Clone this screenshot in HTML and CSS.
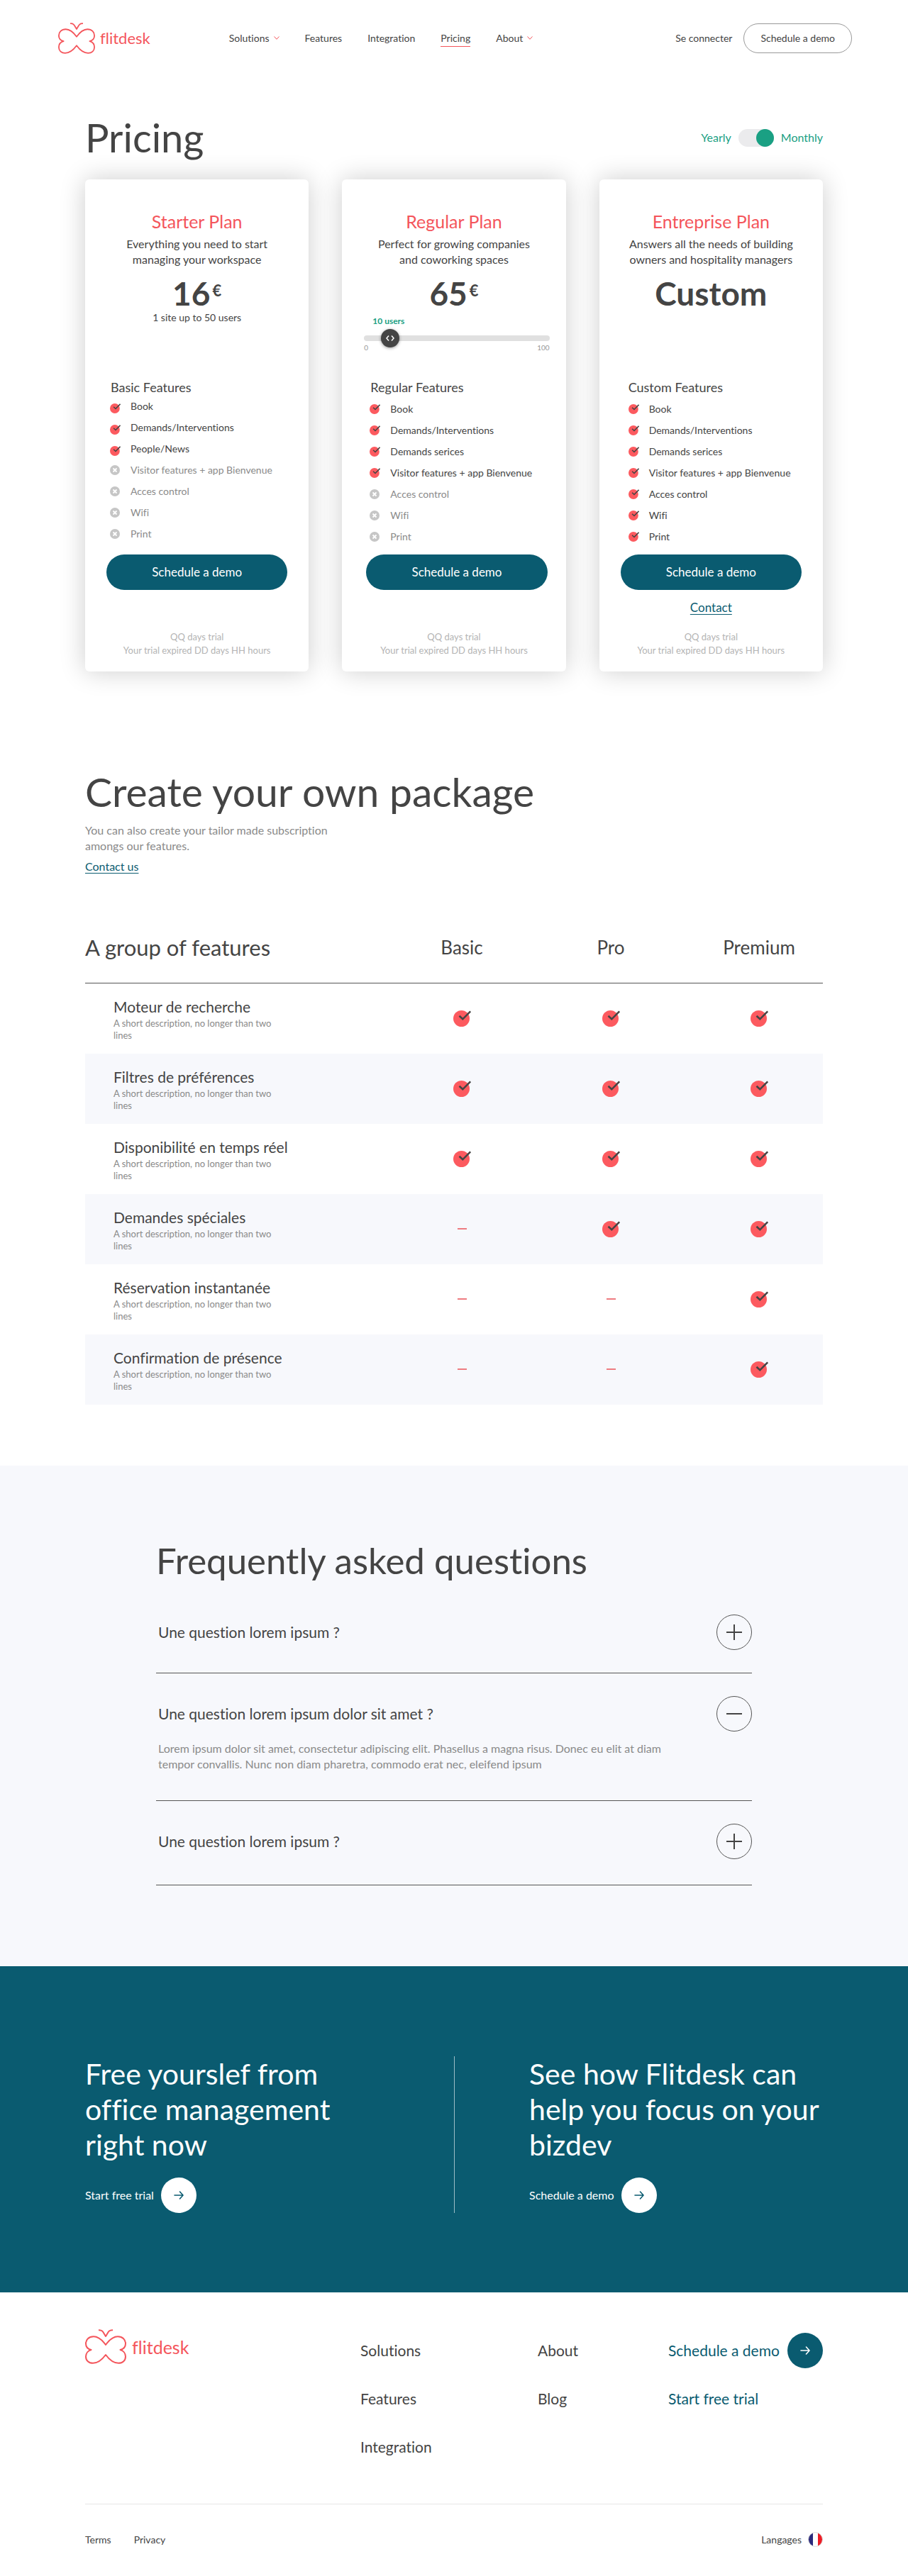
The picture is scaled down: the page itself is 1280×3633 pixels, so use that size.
FILE: index.html
```html
<!DOCTYPE html>
<html lang="en">
<head>
<meta charset="utf-8">
<meta name="viewport" content="width=device-width, initial-scale=1">
<title>Flitdesk – Pricing</title>
<link rel="stylesheet" href="styles.css">
</head>
<body>
<svg class="sprite" aria-hidden="true">
  <symbol id="logo" viewBox="0 0 58 49">
    <path fill="none" stroke="currentColor" stroke-width="2" stroke-linejoin="round" d="M29 22C23.500 14.500 17.500 10.300 12 10.300C5 10.300 1 15 1 20.300C1 24.800 4 28 8.500 29C4 30.200 1 34 1 38.500C1 44 5 47.800 11 47.800C17.500 47.800 23.500 43.500 29 36C34.500 43.500 40.500 47.800 47 47.800C53 47.800 57 44 57 38.500C57 34 54 30.200 49.500 29C54 28 57 24.800 57 20.300C57 15 53 10.300 46 10.300C40.500 10.300 34.500 14.500 29 22Z"/>
    <path fill="none" stroke="currentColor" stroke-width="2" stroke-linejoin="round" d="M19 1.300C25 .8 25.500 4.500 29 10C32.500 4.500 33 .8 39 1.300"/>
  </symbol>
  <symbol id="check" viewBox="0 0 25 23">
    <circle cx="11.500" cy="11.500" r="11.500" fill="#fc5a5f"/>
    <path fill="none" stroke="#444" stroke-width="2.600" d="M8.500 7.800L13.300 12.300L24.200 1.300"/>
  </symbol>
  <symbol id="cross" viewBox="0 0 14 14">
    <circle cx="7" cy="7" r="7" fill="#c6c6c6"/>
    <path stroke="#fff" stroke-width="1.800" d="M4.500 4.500L9.500 9.500M9.500 4.500L4.500 9.500"/>
  </symbol>
  <symbol id="arrow" viewBox="0 0 14 12">
    <path fill="none" stroke="currentColor" stroke-width="1.600" stroke-linecap="round" stroke-linejoin="round" d="M1 6H13M8.500 1L13 6L8.500 11"/>
  </symbol>
  <symbol id="chevron" viewBox="0 0 8 5">
    <path fill="none" stroke="currentColor" d="M.5 .5L4 4.300L7.500 .5"/>
  </symbol>
</svg>

<header class="site-header">
  <a class="logo" href="#"><svg class="logo-mark"><use href="#logo"/></svg>flitdesk</a>
  <nav class="main-nav">
    <a href="#">Solutions <svg class="chevron"><use href="#chevron"/></svg></a>
    <a href="#">Features</a>
    <a href="#">Integration</a>
    <a class="active" href="#">Pricing</a>
    <a href="#">About <svg class="chevron"><use href="#chevron"/></svg></a>
  </nav>
  <div class="account">
    <a href="#">Se connecter</a>
    <button class="outline-button" type="button">Schedule a demo</button>
  </div>
</header>

<main>
  <section class="container pricing">
    <div class="pricing-head">
      <h1>Pricing</h1>
      <div class="billing">
        <label for="billing">Yearly</label>
        <input class="switch" id="billing" type="checkbox" checked>
        <label for="billing">Monthly</label>
      </div>
    </div>
    <div class="plans">
      <article class="plan plan-starter">
        <h2>Starter Plan</h2>
        <p class="pitch">Everything you need to start<br>managing your workspace</p>
        <p class="price">16<sup>€</sup></p>
        <div class="usage"><p class="limit">1 site up to 50 users</p></div>
        <div class="plan-body">
          <h3>Basic Features</h3>
          <ul>
            <li><svg class="tick"><use href="#check"/></svg>Book</li>
            <li><svg class="tick"><use href="#check"/></svg>Demands/Interventions</li>
            <li><svg class="tick"><use href="#check"/></svg>People/News</li>
            <li class="off"><svg class="cross"><use href="#cross"/></svg>Visitor features + app Bienvenue</li>
            <li class="off"><svg class="cross"><use href="#cross"/></svg>Acces control</li>
            <li class="off"><svg class="cross"><use href="#cross"/></svg>Wifi</li>
            <li class="off"><svg class="cross"><use href="#cross"/></svg>Print</li>
          </ul>
          <button class="plan-button" type="button">Schedule a demo</button>
        </div>
        <p class="trial">QQ days trial<br>Your trial expired DD days HH hours</p>
      </article>
      <article class="plan plan-regular">
        <h2>Regular Plan</h2>
        <p class="pitch">Perfect for growing companies<br>and coworking spaces</p>
        <p class="price">65<sup>€</sup></p>
        <div class="usage users">
          <label for="users">10 users</label>
          <input id="users" type="range" min="0" max="100" value="10">
          <div class="bounds"><span>0</span><span>100</span></div>
        </div>
        <div class="plan-body">
          <h3>Regular Features</h3>
          <ul>
            <li><svg class="tick"><use href="#check"/></svg>Book</li>
            <li><svg class="tick"><use href="#check"/></svg>Demands/Interventions</li>
            <li><svg class="tick"><use href="#check"/></svg>Demands serices</li>
            <li><svg class="tick"><use href="#check"/></svg>Visitor features + app Bienvenue</li>
            <li class="off"><svg class="cross"><use href="#cross"/></svg>Acces control</li>
            <li class="off"><svg class="cross"><use href="#cross"/></svg>Wifi</li>
            <li class="off"><svg class="cross"><use href="#cross"/></svg>Print</li>
          </ul>
          <button class="plan-button" type="button">Schedule a demo</button>
        </div>
        <p class="trial">QQ days trial<br>Your trial expired DD days HH hours</p>
      </article>
      <article class="plan plan-custom">
        <h2>Entreprise Plan</h2>
        <p class="pitch">Answers all the needs of building<br>owners and hospitality managers</p>
        <p class="price">Custom</p>
        <div class="usage"></div>
        <div class="plan-body">
          <h3>Custom Features</h3>
          <ul>
            <li><svg class="tick"><use href="#check"/></svg>Book</li>
            <li><svg class="tick"><use href="#check"/></svg>Demands/Interventions</li>
            <li><svg class="tick"><use href="#check"/></svg>Demands serices</li>
            <li><svg class="tick"><use href="#check"/></svg>Visitor features + app Bienvenue</li>
            <li><svg class="tick"><use href="#check"/></svg>Acces control</li>
            <li><svg class="tick"><use href="#check"/></svg>Wifi</li>
            <li><svg class="tick"><use href="#check"/></svg>Print</li>
          </ul>
          <button class="plan-button" type="button">Schedule a demo</button>
          <a class="text-link" href="#">Contact</a>
        </div>
        <p class="trial">QQ days trial<br>Your trial expired DD days HH hours</p>
      </article>
    </div>
  </section>

  <section class="container package">
    <h2>Create your own package</h2>
    <p>You can also create your tailor made subscription amongs our features.</p>
    <a class="text-link" href="#">Contact us</a>

    <table class="compare">
      <colgroup><col><col class="col-basic"><col class="col-pro"><col class="col-premium"></colgroup>
      <thead>
        <tr><th scope="col">A group of features</th><th scope="col">Basic</th><th scope="col">Pro</th><th scope="col">Premium</th></tr>
      </thead>
      <tbody>
        <tr>
          <th scope="row">Moteur de recherche<small>A short description, no longer than two lines</small></th>
          <td><svg class="included"><use href="#check"/></svg></td>
          <td><svg class="included"><use href="#check"/></svg></td>
          <td><svg class="included"><use href="#check"/></svg></td>
        </tr>
        <tr>
          <th scope="row">Filtres de préférences<small>A short description, no longer than two lines</small></th>
          <td><svg class="included"><use href="#check"/></svg></td>
          <td><svg class="included"><use href="#check"/></svg></td>
          <td><svg class="included"><use href="#check"/></svg></td>
        </tr>
        <tr>
          <th scope="row">Disponibilité en temps réel<small>A short description, no longer than two lines</small></th>
          <td><svg class="included"><use href="#check"/></svg></td>
          <td><svg class="included"><use href="#check"/></svg></td>
          <td><svg class="included"><use href="#check"/></svg></td>
        </tr>
        <tr>
          <th scope="row">Demandes spéciales<small>A short description, no longer than two lines</small></th>
          <td><span class="dash"></span></td>
          <td><svg class="included"><use href="#check"/></svg></td>
          <td><svg class="included"><use href="#check"/></svg></td>
        </tr>
        <tr>
          <th scope="row">Réservation instantanée<small>A short description, no longer than two lines</small></th>
          <td><span class="dash"></span></td>
          <td><span class="dash"></span></td>
          <td><svg class="included"><use href="#check"/></svg></td>
        </tr>
        <tr>
          <th scope="row">Confirmation de présence<small>A short description, no longer than two lines</small></th>
          <td><span class="dash"></span></td>
          <td><span class="dash"></span></td>
          <td><svg class="included"><use href="#check"/></svg></td>
        </tr>
      </tbody>
    </table>
  </section>

  <section class="faq">
    <div class="faq-inner">
      <h2>Frequently asked questions</h2>
      <details>
        <summary>Une question lorem ipsum ?<span class="toggle"></span></summary>
        <p>Lorem ipsum dolor sit amet, consectetur adipiscing elit.</p>
      </details>
      <details open>
        <summary>Une question lorem ipsum dolor sit amet ?<span class="toggle"></span></summary>
        <p>Lorem ipsum dolor sit amet, consectetur adipiscing elit. Phasellus a magna risus. Donec eu elit at diam tempor convallis. Nunc non diam pharetra, commodo erat nec, eleifend ipsum</p>
      </details>
      <details>
        <summary>Une question lorem ipsum ?<span class="toggle"></span></summary>
        <p>Lorem ipsum dolor sit amet, consectetur adipiscing elit.</p>
      </details>
    </div>
  </section>

  <section class="cta">
    <div class="container cta-inner">
      <div class="cta-block">
        <h2>Free yourslef from office management right now</h2>
        <a class="arrow-link" href="#">Start free trial<span class="round"><svg class="arrow"><use href="#arrow"/></svg></span></a>
      </div>
      <div class="cta-block">
        <h2>See how Flitdesk can help you focus on your bizdev</h2>
        <a class="arrow-link" href="#">Schedule a demo<span class="round"><svg class="arrow"><use href="#arrow"/></svg></span></a>
      </div>
    </div>
  </section>
</main>

<footer class="container site-footer">
  <div class="footer-links">
    <a class="logo logo-large" href="#"><svg class="logo-mark"><use href="#logo"/></svg>flitdesk</a>
    <ul>
      <li><a href="#">Solutions</a></li>
      <li><a href="#">Features</a></li>
      <li><a href="#">Integration</a></li>
    </ul>
    <ul>
      <li><a href="#">About</a></li>
      <li><a href="#">Blog</a></li>
    </ul>
    <ul class="actions">
      <li><a href="#">Schedule a demo<span class="round"><svg class="arrow"><use href="#arrow"/></svg></span></a></li>
      <li><a href="#">Start free trial</a></li>
    </ul>
  </div>
  <div class="legal">
    <a href="#">Terms</a>
    <a href="#">Privacy</a>
    <button class="language" type="button">Langages
      <svg class="flag" viewBox="0 0 21 21"><clipPath id="disc"><circle cx="10.500" cy="10.500" r="10"/></clipPath><g clip-path="url(#disc)"><path fill="#fff" d="M0 0H21V21H0z"/><path fill="#2b2a7c" d="M0 0H7V21H0z"/><path fill="#ee1c25" d="M14 0H21V21H14z"/></g><circle cx="10.500" cy="10.500" r="10" fill="none" stroke="#ddd"/></svg>
    </button>
  </div>
</footer>
</body>
</html>
```
FILE: styles.css
```css
:root {
  --ink: #444;
  --muted: #8a8a8a;
  --red: #f4555b;
  --teal: #0a5b70;
  --green: #1aa083;
  --mist: #f7f8fc;
}

* { box-sizing: border-box; }

body {
  margin: 0;
  background: #fff;
  color: var(--ink);
  font-family: Lato, "Open Sans", sans-serif;
  font-size: 16px;
  font-variant-ligatures: none;
  line-height: 22px;
}

h1, h2, h3, p, ul { margin: 0; padding: 0; font-weight: 400; }
ul { list-style: none; }
a { color: inherit; text-decoration: none; }
button { font: inherit; color: inherit; cursor: pointer; }
svg { display: block; flex: none; }

.sprite { position: absolute; width: 0; height: 0; }

.container {
  max-width: 1040px;
  margin: 0 auto;
}

/* Header */
.site-header {
  display: flex;
  align-items: center;
  padding: 32px 79px 0 82px;
  font-size: 14px;
}

.logo {
  display: flex;
  align-items: center;
  gap: 7px;
  color: var(--red);
  font-size: 22px;
}

.logo-mark { width: 52px; height: 44px; }

.main-nav {
  display: flex;
  gap: 36px;
  margin-left: 111px;
}

.main-nav a {
  display: flex;
  align-items: center;
  gap: 6px;
  border-bottom: 1px solid transparent;
}

.main-nav .active { border-color: var(--red); }
.chevron { width: 8px; height: 5px; color: var(--red); }

.account {
  display: flex;
  align-items: center;
  gap: 16px;
  margin-left: auto;
}

.outline-button {
  height: 42px;
  padding: 0 23px;
  border: 1px solid #999;
  border-radius: 21px;
  background: none;
}

/* Plans */
.pricing { padding-top: 88px; }

.pricing-head {
  display: flex;
  align-items: center;
  justify-content: space-between;
  margin-bottom: 29px;
}

h1 { font-size: 56px; line-height: 60px; }

.billing {
  display: flex;
  align-items: center;
  gap: 10px;
  color: var(--green);
}

.switch {
  appearance: none;
  display: flex;
  width: 50px;
  height: 25px;
  margin: 0;
  border-radius: 13px;
  background: #ebebed;
}

.switch::before {
  content: "";
  width: 25px;
  height: 25px;
  border-radius: 50%;
  background: var(--green);
}

.switch:checked { justify-content: flex-end; }

.plans {
  display: grid;
  grid-template-columns: repeat(3, 1fr);
  gap: 47px;
}

.plan {
  display: flex;
  flex-direction: column;
  min-height: 694px;
  padding: 44px 0 20px;
  border-radius: 6px;
  background: #fff;
  box-shadow: 0 0 36px rgba(0, 0, 0, .2);
  text-align: center;
}

.plan h2 {
  margin-bottom: 6px;
  color: var(--red);
  font-size: 25px;
  line-height: 30px;
}

.price {
  margin-top: 14px;
  font-size: 46px;
  font-weight: 700;
  line-height: 46px;
}

.price sup {
  margin-left: 3px;
  font-size: 22px;
  line-height: 22px;
  vertical-align: 13px;
}

.usage { height: 97px; }

.limit { font-size: 14px; }

.users {
  display: flex;
  flex-direction: column;
  padding: 7px 23px 0 31px;
}

.users label {
  align-self: flex-start;
  margin-left: 12px;
  color: var(--green);
  font-size: 12px;
  font-weight: 700;
  line-height: 18px;
}

.users input {
  appearance: none;
  width: 100%;
  height: 14px;
  margin: 8px 0 0;
  background: none;
}

.users input::-webkit-slider-runnable-track {
  height: 8px;
  border-radius: 4px;
  background: #e0e0e0;
}

.users input::-webkit-slider-thumb {
  appearance: none;
  width: 26px;
  height: 26px;
  margin-top: -9px;
  border-radius: 50%;
  background: var(--ink) url("data:image/svg+xml,%3Csvg xmlns='http://www.w3.org/2000/svg' viewBox='0 0 26 26' fill='none' stroke='white' stroke-width='1.500'%3E%3Cpath d='M11 9.500L8 13L11 16.500M15 9.500L18 13L15 16.500'/%3E%3C/svg%3E");
  box-shadow: 0 1px 4px rgba(0, 0, 0, .4);
}

.bounds {
  display: flex;
  justify-content: space-between;
  color: #999;
  font-size: 10px;
  line-height: 12px;
}

.plan-body {
  display: flex;
  flex-direction: column;
  padding: 0 30px;
}

.plan-regular .plan-body { padding: 0 26px 0 34px; }

.plan h3 {
  padding-left: 6px;
  font-size: 18px;
  line-height: 24px;
  text-align: left;
}

.plan ul {
  padding: 4px 0 10px 5px;
  font-size: 14px;
  line-height: 30px;
  text-align: left;
}

.plan-starter ul { padding: 0 0 14px 5px; }
.plan-starter .tick { margin-top: 6px; }
.plan-custom h3 { padding-left: 11px; }
.plan-custom ul { padding-left: 11px; }

.plan li {
  display: flex;
  align-items: center;
  gap: 14px;
}

.off { color: var(--muted); }
.tick { width: 15px; height: 14px; }
.cross { width: 14px; height: 14px; margin-right: 1px; }

.plan-button {
  height: 50px;
  border: 0;
  border-radius: 25px;
  background: var(--teal);
  color: #fff;
  font-size: 17px;
}

.text-link {
  color: var(--teal);
  text-decoration: underline;
  text-underline-offset: 3px;
}

.plan-body .text-link {
  align-self: center;
  margin-top: 14px;
  font-size: 17px;
}

.trial {
  margin-top: auto;
  color: #b4b4b4;
  font-size: 13px;
  line-height: 19px;
}

/* Package comparison */
.package { padding: 137px 0 86px; }

.package h2 {
  margin-bottom: 12px;
  font-size: 57px;
  line-height: 64px;
}

.package p {
  max-width: 370px;
  margin-bottom: 7px;
  color: var(--muted);
}

.compare {
  width: 100%;
  margin-top: 53px;
  border-collapse: collapse;
  table-layout: fixed;
}

.col-basic { width: 182px; }
.col-pro { width: 238px; }
.col-premium { width: 180px; }

.compare th { font-weight: 400; }

.compare thead th {
  height: 100px;
  padding: 0;
  border-bottom: 1px solid #555;
  font-size: 26px;
}

.compare thead th:first-child {
  font-size: 31px;
  text-align: left;
}

.compare tbody th {
  padding: 20px 0 17px 40px;
  font-size: 21px;
  line-height: 26px;
  text-align: left;
}

.compare small {
  display: block;
  max-width: 240px;
  margin-top: 2px;
  color: var(--muted);
  font-size: 13px;
  line-height: 17px;
}

.compare td { padding: 0; }
.compare tbody tr:nth-child(even) { background: var(--mist); }
.included { width: 25px; height: 23px; margin: 0 auto; }

.dash {
  display: block;
  width: 13px;
  height: 2px;
  margin: 0 auto;
  background: #ee7b80;
}

/* Questions */
.faq {
  padding: 104px 0 114px;
  background: var(--mist);
}

.faq-inner {
  max-width: 840px;
  margin: 0 auto;
}

.faq h2 {
  margin-bottom: 14px;
  font-size: 51px;
  line-height: 60px;
}

.faq details {
  padding: 32px 0;
  border-bottom: 1px solid #555;
}

.faq details:last-child { padding-bottom: 36px; }

.faq summary {
  display: flex;
  align-items: center;
  justify-content: space-between;
  padding-left: 3px;
  font-size: 21px;
  cursor: pointer;
}

.faq details p {
  max-width: 760px;
  padding: 13px 0 8px 3px;
  color: var(--muted);
}

.toggle {
  display: grid;
  place-items: center;
  width: 50px;
  height: 50px;
  border: 1px solid #555;
  border-radius: 50%;
}

.toggle::before,
.toggle::after {
  content: "";
  grid-area: 1 / 1;
  width: 22px;
  height: 2px;
  background: var(--ink);
}

.toggle::after { width: 2px; height: 22px; }
[open] .toggle::after { display: none; }

/* Call to action */
.cta {
  padding: 127px 0 112px;
  background: var(--teal);
  color: #fff;
}

.cta-inner {
  display: grid;
  grid-template-columns: 1fr 1fr;
}

.cta-block + .cta-block {
  padding-left: 105px;
  border-left: 1px solid #9dbdc6;
}

.cta h2 {
  max-width: 420px;
  margin-bottom: 21px;
  font-size: 41px;
  line-height: 50px;
}

.cta-block + .cta-block h2 { white-space: normal; }

.arrow-link {
  display: inline-flex;
  align-items: center;
  gap: 10px;
}

.round {
  display: grid;
  place-items: center;
  width: 50px;
  height: 50px;
  border-radius: 50%;
  background: #fff;
  color: var(--teal);
}

.arrow { width: 14px; height: 12px; }

/* Footer */
.site-footer { padding: 48px 0 40px; }

.footer-links {
  display: grid;
  grid-template-columns: 388px 250px 184px 1fr;
  align-items: start;
  padding-bottom: 46px;
  border-bottom: 1px solid #e6e6e6;
  font-size: 21px;
  line-height: 68px;
}

.logo-large {
  gap: 8px;
  font-size: 25px;
  line-height: 58px;
}

.logo-large .logo-mark { width: 58px; height: 49px; }

.actions { color: var(--teal); }

.actions a {
  display: flex;
  align-items: center;
  justify-content: space-between;
  height: 68px;
  white-space: nowrap;
}

.actions .round { background: var(--teal); color: #fff; }

.legal {
  display: flex;
  align-items: center;
  gap: 32px;
  padding-top: 38px;
  font-size: 14px;
}

.language {
  display: flex;
  align-items: center;
  gap: 9px;
  height: 24px;
  margin-left: auto;
  padding: 0;
  border: 0;
  background: none;
}

.flag { width: 21px; height: 21px; }
```
